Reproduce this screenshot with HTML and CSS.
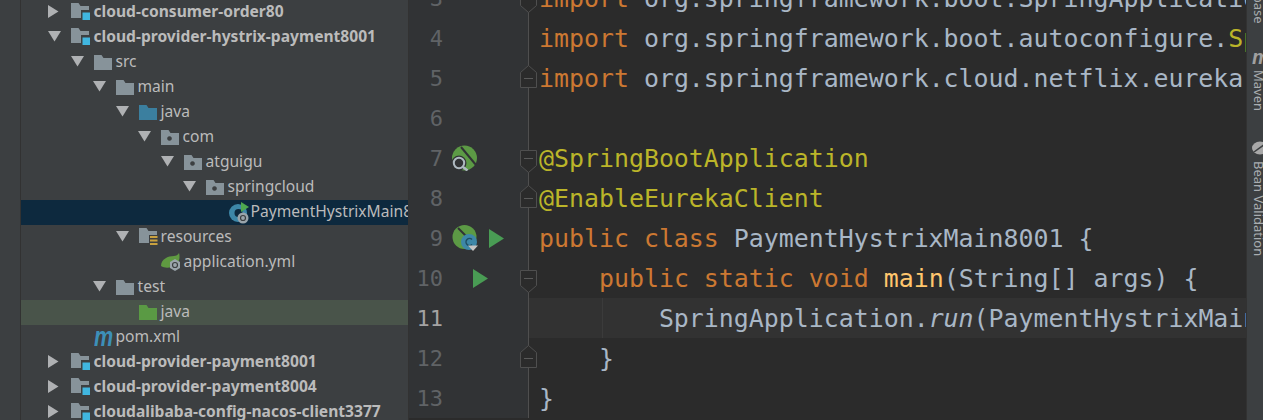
FILE: index.html
```html
<!DOCTYPE html>
<html lang="en">
<head>
<meta charset="utf-8">
<title>PaymentHystrixMain8001</title>
<link rel="stylesheet" href="styles.css">
</head>
<body>
<svg class="defs" width="0" height="0" aria-hidden="true">
  <symbol id="open" viewBox="0 0 13 11"><path d="M0 0h13L6.500 10.500z"/></symbol>
  <symbol id="closed" viewBox="0 0 11 13"><path d="M0 0l10.500 6.500L0 13z"/></symbol>
  <symbol id="folder" viewBox="0 0 18 15"><path d="M0 0h7.500l2 3H18v12H0z"/></symbol>
  <symbol id="pkg" viewBox="0 0 18 15"><path fill-rule="evenodd" d="M0 0h7.500l2 3H18v12H0zM8.500 6.200a2.300 2.300 0 1 0 .01 0z"/></symbol>
  <symbol id="module" viewBox="0 0 20 18"><path fill="#87939a" d="M0 0h7.500l2 3H18v12H0z"/><path fill="#3c3f41" d="M10 7h10v11H10z"/><path fill="#40b6e0" d="M11.500 9.500H19V17h-7.500z"/></symbol>
  <symbol id="res" viewBox="0 0 19 18"><path fill="#87939a" d="M0 0h7.500l2 3H18v12H0z"/><path fill="#3c3f41" d="M10 7h9v11h-9z"/><path fill="#c9a13f" d="M11 8h7.500v2H11zM11 11.500h7.500v2H11zM11 15h7.500v2H11z"/></symbol>
  <symbol id="cls" viewBox="0 0 20 22"><circle cx="9" cy="11" r="9" fill="#3d87a8"/><circle cx="9.500" cy="11" r="4" fill="#0d293e"/><path fill="#4fa94f" d="M12 0l8 5-8 5z"/><circle cx="14" cy="16" r="5.500" fill="#9aa4aa"/><circle cx="14" cy="16" r="2.500" fill="none" stroke="#3c3f41" stroke-width="1.200"/></symbol>
  <symbol id="leaf" viewBox="0 0 20 19"><path fill="#5f9a41" d="M0 13C0 6 7 3 13 3c2 0 4-1 5-3 2 7-2 13-7 14-4 1-8 1-11-1z"/><path fill="#9aa4aa" d="M14 6l5 3v6l-5 3-5-3V9z"/><circle cx="14" cy="12" r="2.500" fill="none" stroke="#3c3f41" stroke-width="1.200"/></symbol>
  <symbol id="run" viewBox="0 0 15 19"><path fill="#499c54" d="M0 0l15 9.500L0 19z"/></symbol>
  <symbol id="fold-down" viewBox="0 0 17 23"><path fill="#2b2b2b" stroke="#4f4f4f" d="M.5.500h16v15l-8 7-8-7z"/><path stroke="#5a5a5a" d="M4 8.500h9"/></symbol>
  <symbol id="fold-up" viewBox="0 0 17 23"><path fill="#2b2b2b" stroke="#4f4f4f" d="M.5 22.500h16v-15l-8-7-8 7z"/><path stroke="#5a5a5a" d="M4 13.500h9"/></symbol>
</svg>

<div class="ide">
  <div class="stripe-left"></div>

  <div class="tree">
    <div class="row l0"><svg class="arrow closed"><use href="#closed"/></svg><svg class="ico module"><use href="#module"/></svg><span class="label bold">cloud-consumer-order80</span></div>
    <div class="row l0"><svg class="arrow opened"><use href="#open"/></svg><svg class="ico module"><use href="#module"/></svg><span class="label bold">cloud-provider-hystrix-payment8001</span></div>
    <div class="row l1"><svg class="arrow opened"><use href="#open"/></svg><svg class="ico fold grey"><use href="#folder"/></svg><span class="label">src</span></div>
    <div class="row l2"><svg class="arrow opened"><use href="#open"/></svg><svg class="ico fold grey"><use href="#folder"/></svg><span class="label">main</span></div>
    <div class="row l3"><svg class="arrow opened"><use href="#open"/></svg><svg class="ico fold blue"><use href="#folder"/></svg><span class="label">java</span></div>
    <div class="row l4"><svg class="arrow opened"><use href="#open"/></svg><svg class="ico fold grey"><use href="#pkg"/></svg><span class="label">com</span></div>
    <div class="row l5"><svg class="arrow opened"><use href="#open"/></svg><svg class="ico fold grey"><use href="#pkg"/></svg><span class="label">atguigu</span></div>
    <div class="row l6"><svg class="arrow opened"><use href="#open"/></svg><svg class="ico fold grey"><use href="#pkg"/></svg><span class="label">springcloud</span></div>
    <div class="row l7 selected"><span class="noarrow"></span><svg class="ico class-ico"><use href="#cls"/></svg><span class="label clip">PaymentHystrixMain8001</span></div>
    <div class="row l3"><svg class="arrow opened"><use href="#open"/></svg><svg class="ico res"><use href="#res"/></svg><span class="label">resources</span></div>
    <div class="row l4"><span class="noarrow"></span><svg class="ico leaf"><use href="#leaf"/></svg><span class="label">application.yml</span></div>
    <div class="row l2"><svg class="arrow opened"><use href="#open"/></svg><svg class="ico fold grey"><use href="#folder"/></svg><span class="label">test</span></div>
    <div class="row l3 testdir"><span class="noarrow"></span><svg class="ico fold green"><use href="#folder"/></svg><span class="label">java</span></div>
    <div class="row l1"><span class="noarrow"></span><span class="ico maven">m</span><span class="label">pom.xml</span></div>
    <div class="row l0"><svg class="arrow closed"><use href="#closed"/></svg><svg class="ico module"><use href="#module"/></svg><span class="label bold">cloud-provider-payment8001</span></div>
    <div class="row l0"><svg class="arrow closed"><use href="#closed"/></svg><svg class="ico module"><use href="#module"/></svg><span class="label bold">cloud-provider-payment8004</span></div>
    <div class="row l0"><svg class="arrow closed"><use href="#closed"/></svg><svg class="ico module"><use href="#module"/></svg><span class="label bold">cloudalibaba-config-nacos-client3377</span></div>
  </div>

  <div class="editor">
    <div class="line">
      <div class="gutter"><span class="num">3</span><svg class="fold-mark down"><use href="#fold-down"/></svg></div>
      <code class="code"><span class="kw">import</span> org.springframework.boot.SpringApplication;</code>
    </div>
    <div class="line">
      <div class="gutter"><span class="num">4</span></div>
      <code class="code"><span class="kw">import</span> org.springframework.boot.autoconfigure.<span class="ann">SpringBootApplication</span>;</code>
    </div>
    <div class="line">
      <div class="gutter"><span class="num">5</span><svg class="fold-mark up"><use href="#fold-up"/></svg></div>
      <code class="code"><span class="kw">import</span> org.springframework.cloud.netflix.eureka.EnableEurekaClient;</code>
    </div>
    <div class="line">
      <div class="gutter"><span class="num">6</span></div>
      <code class="code"></code>
    </div>
    <div class="line">
      <div class="gutter"><span class="num">7</span>
        <svg class="spring" viewBox="0 0 28 26"><circle cx="12.500" cy="13" r="12.500" fill="#5c9a45"/><path d="M9 2l15 18" stroke="#313335" stroke-width="2"/><circle cx="7" cy="18" r="7.500" fill="#313335"/><circle cx="7" cy="18" r="5.200" fill="none" stroke="#aeb9c0" stroke-width="2"/><path d="M11 22l4.500 3.500" stroke="#aeb9c0" stroke-width="2.500"/></svg>
        <svg class="fold-mark down"><use href="#fold-down"/></svg></div>
      <code class="code"><span class="ann">@SpringBootApplication</span></code>
    </div>
    <div class="line">
      <div class="gutter"><span class="num">8</span><svg class="fold-mark up"><use href="#fold-up"/></svg></div>
      <code class="code"><span class="ann">@EnableEurekaClient</span></code>
    </div>
    <div class="line">
      <div class="gutter"><span class="num">9</span>
        <svg class="spring" viewBox="0 0 28 26"><circle cx="12.500" cy="12" r="12" fill="#5c9a45"/><path d="M6 3l14 14" stroke="#313335" stroke-width="2"/><circle cx="17" cy="17" r="8" fill="#3d87a8"/><path d="M20 14.500a3.500 3.500 0 1 0 0 5" fill="none" stroke="#1f4e63" stroke-width="1.500"/><path d="M16 20.500h10l-5 5.500z" fill="#c4c4c4"/></svg>
        <svg class="run run-9"><use href="#run"/></svg>
      </div>
      <code class="code"><span class="kw">public class</span> PaymentHystrixMain8001 {</code>
    </div>
    <div class="line">
      <div class="gutter"><span class="num">10</span><svg class="run run-10"><use href="#run"/></svg><svg class="fold-mark down"><use href="#fold-down"/></svg></div>
      <code class="code">    <span class="kw">public static void</span> <span class="fn">main</span>(String[] args) {</code>
    </div>
    <div class="line current">
      <div class="gutter"><span class="num">11</span></div>
      <code class="code"><span class="guide"></span>        SpringApplication.<i>run</i>(PaymentHystrixMain8001.class, args);</code>
    </div>
    <div class="line">
      <div class="gutter"><span class="num">12</span><svg class="fold-mark up"><use href="#fold-up"/></svg></div>
      <code class="code">    }</code>
    </div>
    <div class="line">
      <div class="gutter"><span class="num">13</span></div>
      <code class="code">}</code>
    </div>
  </div>

  <div class="stripe-right">
    <span class="vtext cut">Database</span>
    <span class="side-m">m</span>
    <span class="vtext">Maven</span>
    <svg class="bean" viewBox="0 0 16 14"><ellipse cx="8" cy="7" rx="8" ry="6.500" fill="#a8a8a8"/><path d="M2 11L13 3" stroke="#3c3f41" stroke-width="1.500"/></svg>
    <span class="vtext">Bean Validation</span>
  </div>
</div>
</body>
</html>
```

FILE: styles.css
```css
* { box-sizing: border-box; }
html, body { margin: 0; height: 100%; }
body { overflow: hidden; background: #2b2b2b; }
.defs { display: block; height: 0; }

.ide { display: flex; width: 1263px; height: 420px; overflow: hidden; }

.stripe-left {
  flex: 0 0 21px;
  background: #3c3f41;
  border-right: 1px solid #323232;
}

/* project tree */
.tree {
  flex: 0 0 388px;
  background: #3c3f41;
  border-right: 1px solid #323232;
  overflow: hidden;
  font: 15.6px/25px "Noto Sans", sans-serif;
  color: #bbbbbb;
}
.row { display: flex; align-items: center; height: 25px; white-space: nowrap; }
.l0 { padding-left: 27px; }
.l1 { padding-left: 50px; }
.l2 { padding-left: 72px; }
.l3 { padding-left: 95px; }
.l4 { padding-left: 117px; }
.l5 { padding-left: 140px; }
.l6 { padding-left: 162px; }
.l7 { padding-left: 185px; }
.selected { background: #0d293e; }
.testdir { background: #49544a; }
.label { padding-bottom: 2px; }
.bold { font-weight: 700; }
.noarrow { flex: 0 0 22.5px; }
.arrow { flex: 0 0 auto; fill: #afb1b3; margin-bottom: 2px; }
.arrow.opened { height: 11px; width: 13px; margin-right: 9.5px; }
.arrow.closed { height: 13px; width: 11px; margin-right: 11.5px; }
.ico { flex: 0 0 auto; margin-right: 4px; }
.fold { width: 18px; height: 15px; margin-bottom: 1px; }
.grey { fill: #87939a; }
.blue { fill: #3b7f9f; }
.green { fill: #5a9a44; }
.module { width: 20px; height: 18px; margin-right: 3px; margin-bottom: 1px; }
.res { width: 19px; height: 18px; margin-right: 3px; margin-bottom: 1px; }
.class-ico { width: 20px; height: 22px; margin-right: 2px; }
.leaf { width: 20px; height: 19px; margin-right: 3px; }
.maven {
  width: 19px;
  margin-right: 3px;
  font: italic 700 27px/25px "Liberation Sans", sans-serif;
  color: #3d8fb8;
  transform: scaleX(.8);
  transform-origin: left center;
}
.clip { overflow: hidden; }

/* code editor */
.editor {
  flex: 0 0 837px;
  min-width: 0;
  overflow: hidden;
  margin-top: -22px;
  font: 24.9px/40px "DejaVu Sans Mono", monospace;
  color: #a9b7c6;
}
.line { display: flex; height: 40px; position: relative; }
.gutter {
  position: relative;
  flex: 0 0 120px;
  display: flex;
  align-items: center;
  background: #313335;
  border-right: 1px solid #4f4f4f;
}
.num {
  flex: 0 0 34px;
  text-align: right;
  font-size: 22px;
  padding-top: 2px;
  color: #606366;
}
.current .num { color: #a4a3a3; }
.current .code { background: #323232; }
.code {
  position: relative;
  flex: 1;
  min-width: 0;
  padding: 1px 0 0 10px;
  font: inherit;
  white-space: pre;
  overflow: hidden;
}
.guide { position: absolute; left: 73px; top: 0; bottom: 0; border-left: 1px solid #3b3b3b; }
.kw { color: #cc7832; }
.ann { color: #bbb529; }
.fn { color: #ffc66d; }
.spring { flex: 0 0 28px; height: 26px; margin-left: 9px; }
.run { flex: 0 0 15px; height: 19px; }
.run-9 { margin-left: 9px; }
.run-10 { margin-left: 30px; }
.fold-mark { position: absolute; left: 111px; width: 17px; height: 23px; z-index: 1; }
.down { top: 12px; }
.up { top: 7px; }

/* right tool stripe */
.stripe-right {
  flex: 0 0 17px;
  background: #3c3f41;
  border-left: 1px solid #323232;
  display: flex;
  flex-direction: column;
  align-items: flex-start;
  padding-left: 5px;
  overflow: hidden;
  color: #a9adb0;
  font: 13px/13px "Noto Sans", sans-serif;
}
.vtext { writing-mode: vertical-rl; white-space: nowrap; flex: 0 0 auto; }
.cut { margin-top: -34px; }
.side-m { font: italic 700 20px/14px "Liberation Sans", sans-serif; color: #a0a0a0; margin-top: 26px; margin-bottom: 6px; flex: 0 0 auto; }
.bean { flex: 0 0 14px; width: 16px; margin-top: 30px; margin-bottom: 6px; }
```
